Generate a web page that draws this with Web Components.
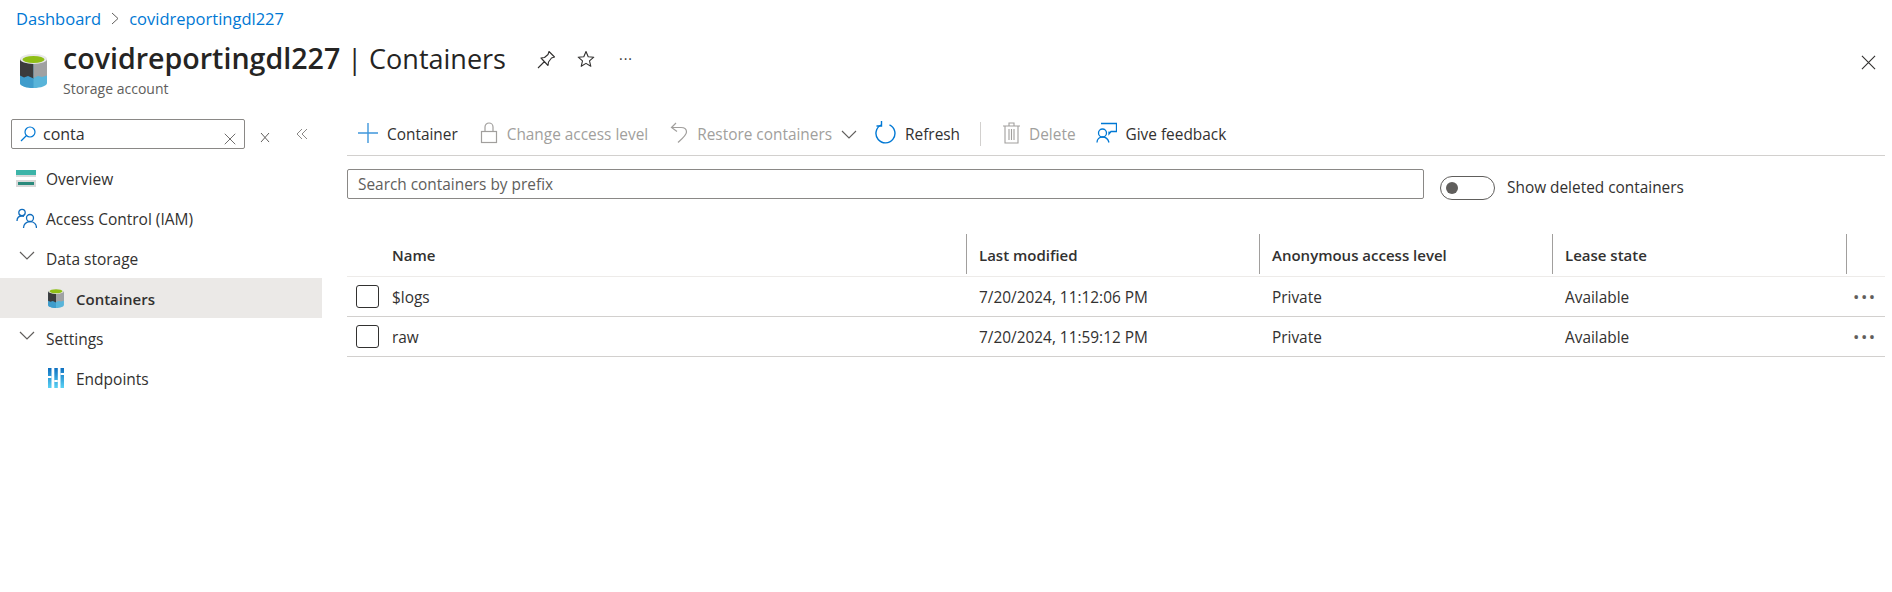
<!DOCTYPE html>
<html>
<head>
<meta charset="utf-8">
<title>covidreportingdl227 | Containers</title>
<style>
  html, body { margin: 0; height: 100%; background: #fff; }
  body { font-family: "Open Sans", "Noto Sans", sans-serif; font-size: 16px; color: #323130; overflow: hidden; }
</style>
</head>
<body>
<az-blade></az-blade>

<script>
// Icons used by more than one element.
const icons = {
  storage: `<svg viewBox="0 0 27 34" width="100%" height="100%">
    <path d="M0 5v24c0 2.700 6 5 13.500 5s13.500-2.300 13.500-5V5z" fill="#59b4d9"/>
    <path d="M0 5v24c0 2.700 6 5 13.500 5V5z" fill="#3f9ccb"/>
    <path d="M0 5v16.500l4 2 4-1.500 5.500 2.500V5z" fill="#3b3b3c"/>
    <path d="M27 5v16.500l-5 1.500-4-1-4.500 2V5z" fill="#a0a1a2"/>
    <ellipse cx="13.500" cy="5" rx="13.500" ry="5" fill="#e8e8e8"/>
    <ellipse cx="13.500" cy="5.500" rx="11" ry="3.500" fill="#8fbe15"/>
  </svg>`,
  close: `<svg viewBox="0 0 16 16" width="100%" height="100%"><path d="M1 1l14 14M15 1L1 15" stroke="currentColor" stroke-width="1.200" fill="none"/></svg>`,
  chevron: `<svg viewBox="0 0 16 10" width="100%" height="100%"><path d="M1 1l7 7 7-7" stroke="currentColor" stroke-width="1.200" fill="none"/></svg>`
};

customElements.define("az-breadcrumb", class AzBreadcrumb extends HTMLElement {
  constructor() {
    super();
    this.attachShadow({ mode: "open" }).innerHTML = `
      <style>
        :host { display: flex; align-items: center; height: 36px; padding-left: 16px; color: #0078d4; font-size: 16.500px; gap: 10px; }
        svg { color: #605e5c; }
      </style>
      <span>Dashboard</span>
      <svg width="8" height="13" viewBox="0 0 8 13"><path d="M1 1l6 5.500-6 5.500" stroke="currentColor" fill="none"/></svg>
      <span>covidreportingdl227</span>`;
  }
});

customElements.define("az-page-header", class AzPageHeader extends HTMLElement {
  constructor() {
    super();
    this.attachShadow({ mode: "open" }).innerHTML = `
      <style>
        :host { display: flex; height: 74px; box-sizing: border-box; padding: 18px 16px 0 20px; }
        .logo { width: 27px; height: 34px; margin-right: 16px; }
        .titles { display: flex; flex-direction: column; }
        h1 { margin: -14px 0 0; font-size: 27px; line-height: 36px; font-weight: 400; color: #252423; white-space: nowrap; }
        h1 b { font-weight: 600; font-size: 28.600px; }
        small { font-size: 14px; line-height: 20px; color: #605e5c; margin-top: 2px; }
        .cmds { display: flex; gap: 21px; align-items: center; height: 24px; margin: -7px 0 0 31px; color: #323130; }
        .dots { font-size: 14px; letter-spacing: 1px; margin: -2px 0 0 3px; }
        .close { width: 15px; height: 15px; margin: 0 0 0 auto; color: #323130; margin-top: -1px; }
      </style>
      <div class="logo">${icons.storage}</div>
      <div class="titles">
        <h1><b>covidreportingdl227</b> | Containers</h1>
        <small>Storage account</small>
      </div>
      <div class="cmds">
        <svg width="19" height="19" viewBox="0 0 19 19" fill="none" stroke="currentColor" stroke-width="1.100"><path d="M12 1.500l5.500 5.500-3 1-3 4-.5 3.500L4 8l3.500-.5 3.500-3zM7.500 11.500L1 18" stroke-linejoin="round"/></svg>
        <svg width="18" height="18" viewBox="0 0 18 18" fill="none" stroke="currentColor" stroke-width="1.100"><path d="M9 1.500l2.200 5.200 5.600.5-4.300 3.600 1.300 5.500L9 13.400l-4.800 2.900 1.300-5.500L1.200 7.200l5.600-.5z" stroke-linejoin="round"/></svg>
        <span class="dots">···</span>
      </div>
      <div class="close">${icons.close}</div>`;
  }
});

customElements.define("az-nav-item", class AzNavItem extends HTMLElement {
  constructor() {
    super();
    this.attachShadow({ mode: "open" }).innerHTML = `
      <style>
        :host { display: flex; align-items: center; height: 40px; box-sizing: border-box; padding: 2px 0 0 16px; color: #323130; font-size: 15.500px; }
        :host([child]) { padding-left: 46px; }
        :host([selected]) { background: #ebe9e7; font-weight: 600; font-size: 15px; }
        .icon { display: flex; width: 22px; height: 20px; margin: -2px 8px 0 0; align-items: center; justify-content: flex-start; }
      </style>
      <span class="icon"><slot name="icon"></slot></span>
      <slot></slot>`;
  }
});

customElements.define("az-side-nav", class AzSideNav extends HTMLElement {
  constructor() {
    super();
    this.attachShadow({ mode: "open" }).innerHTML = `
      <style>
        :host { display: block; width: 322px; flex: none; }
        .searchrow { display: flex; align-items: flex-start; height: 48px; padding: 9px 0 0 11px; box-sizing: border-box; }
        .search { display: flex; align-items: center; width: 234px; height: 30px; box-sizing: border-box; border: 1px solid #8a8886; border-radius: 2px; padding: 0 8px 0 8px; font-size: 16px; }
        .search span { flex: 1; margin-left: 7px; }
        .x { width: 12px; height: 12px; color: #605e5c; }
        .side-x { width: 10px; height: 12px; margin: 8px 0 0 15px; color: #605e5c; }
        .collapse { margin: 9px 0 0 26px; color: #8a8886; }
        nav { display: block; }
      </style>
      <div class="searchrow">
        <div class="search">
          <svg width="16" height="16" viewBox="0 0 16 16" fill="none" stroke="#0078d4" stroke-width="1.200"><circle cx="10" cy="6" r="5"/><path d="M6.500 9.500L1 15"/></svg>
          <span>conta</span>
          <div class="x">${icons.close}</div>
        </div>
        <div class="side-x"><svg viewBox="0 0 10 12" width="10" height="12" fill="none" stroke="currentColor"><path d="M1 1l8 9M9 1l-8 9M1 11h.1M9 11h.1"/></svg></div>
        <svg class="collapse" width="12" height="12" viewBox="0 0 12 12" fill="none" stroke="currentColor"><path d="M6 1L1 6l5 5M11 1L6 6l5 5"/></svg>
      </div>
      <nav><slot></slot></nav>`;
  }
});

customElements.define("az-tool-button", class AzToolButton extends HTMLElement {
  constructor() {
    super();
    this.attachShadow({ mode: "open" }).innerHTML = `
      <style>
        :host { display: inline-flex; align-items: center; gap: 9px; height: 36px; padding: 0 11px; color: #323130; font-size: 15.400px; white-space: nowrap; }
        :host([disabled]) { color: #a19f9d; }
        .icon { display: flex; align-items: center; margin-top: -2px; }
        .label { display: flex; align-items: center; gap: 9px; padding-top: 2px; }
      </style>
      <span class="icon"><slot name="icon"></slot></span>
      <span class="label"><slot></slot></span>`;
  }
});

customElements.define("az-toolbar", class AzToolbar extends HTMLElement {
  constructor() {
    super();
    this.attachShadow({ mode: "open" }).innerHTML = `
      <style>
        :host { display: flex; align-items: center; height: 46px; box-sizing: border-box; padding: 2px 0 0; border-bottom: 1px solid #d2d0ce; }
      </style>
      <slot></slot>`;
  }
});

customElements.define("az-filter-bar", class AzFilterBar extends HTMLElement {
  constructor() {
    super();
    this.attachShadow({ mode: "open" }).innerHTML = `
      <style>
        :host { display: flex; align-items: flex-start; margin-top: 13px; height: 65px; font-size: 15.400px; }
        .box { width: 1077px; height: 30px; box-sizing: border-box; border: 1px solid #8a8886; border-radius: 2px; padding-left: 10px; line-height: 30px; color: #605e5c; }
        .toggle { width: 55px; height: 24px; box-sizing: border-box; margin: 7px 12px 0 16px; border: 1px solid #605e5c; border-radius: 12px; padding: 5px; }
        .knob { display: block; width: 12px; height: 12px; border-radius: 50%; background: #605e5c; }
        .label { margin-top: 7px; line-height: 24px; }
      </style>
      <div class="box">Search containers by prefix</div>
      <div class="toggle"><span class="knob"></span></div>
      <div class="label">Show deleted containers</div>`;
  }
});

customElements.define("az-grid-row", class AzGridRow extends HTMLElement {
  constructor() {
    super();
    this.attachShadow({ mode: "open" }).innerHTML = `
      <style>
        :host { display: grid; grid-template-columns: 619px 293px 293px 294px 39px; height: 40px; box-sizing: border-box; border-bottom: 1px solid #d2d0ce; font-size: 15.400px; color: #323130; align-items: center; }
        :host([header]) { height: 43px; font-weight: 600; font-size: 15px; border-bottom: 1px solid #edebe9; align-items: stretch; padding-bottom: 2px; }
        ::slotted(*) { display: flex; align-items: center; }
        .first { display: flex; align-items: center; height: 100%; }
        .check { width: 23px; height: 23px; box-sizing: border-box; border: 1px solid #323130; border-radius: 3px; margin: 0 13px 0 9px; }
        :host([header]) .check { visibility: hidden; }
      </style>
      <div class="first"><span class="check"></span><slot name="name"></slot></div>
      <slot name="modified"></slot>
      <slot name="access"></slot>
      <slot name="lease"></slot>
      <slot name="more"></slot>`;
  }
});

customElements.define("az-cell", class AzCell extends HTMLElement {
  constructor() {
    super();
    this.attachShadow({ mode: "open" }).innerHTML = `
      <style>
        :host { display: flex; align-items: center; height: 100%; box-sizing: border-box; padding: 2px 0 0 13px; }
        :host([head]) { border-left: 1px solid #a19f9d; padding-left: 12px; }
        :host([plain]) { padding-left: 0; border: 0; }
        :host([tail]) { padding: 0 0 0 7px; font-size: 17px; letter-spacing: 1.500px; color: #605e5c; }
      </style>
      <slot></slot>`;
  }
});

const rowMarkup = (name, date) => `
  <az-grid-row>
    <az-cell slot="name" plain>${name}</az-cell>
    <az-cell slot="modified">${date}</az-cell>
    <az-cell slot="access">Private</az-cell>
    <az-cell slot="lease">Available</az-cell>
    <az-cell slot="more" tail>•••</az-cell>
  </az-grid-row>`;

customElements.define("az-blade", class AzBlade extends HTMLElement {
  constructor() {
    super();
    this.attachShadow({ mode: "open" }).innerHTML = `
      <style>
        :host { display: flex; flex-direction: column; height: 592px; }
        .body { display: flex; flex: 1; }
        main { flex: 1; margin: 0 7px 0 25px; min-width: 0; }
        .sep { width: 1px; height: 24px; background: #d2d0ce; margin: 0 11px 0 9px; }
        .refresh { margin-left: -4px; }
        .feedback { margin-left: -2px; }
        svg { display: block; }
      </style>
      <az-breadcrumb></az-breadcrumb>
      <az-page-header></az-page-header>
      <div class="body">
        <az-side-nav>
          <az-nav-item>
            <svg slot="icon" width="20" height="17" viewBox="0 0 20 17"><rect width="20" height="17" fill="#d9d9d9"/><rect width="20" height="5" fill="#3cb4a8"/><rect y="7" width="20" height="3" fill="#fff"/><rect x="2" y="12" width="16" height="3" fill="#2a8a7c"/></svg>
            Overview
          </az-nav-item>
          <az-nav-item>
            <svg slot="icon" width="21" height="21" viewBox="0 0 21 21" fill="none" stroke="#0f6cbd" stroke-width="1.300"><circle cx="6" cy="4.500" r="3.200"/><path d="M1 13c0-3 2-5 5-5 1 0 1.500.2 2 .4"/><circle cx="14" cy="10" r="3.500"/><path d="M7.500 20c0-3.500 2.500-6.300 6.500-6.300s6.500 2.800 6.500 6.300"/></svg>
            Access Control (IAM)
          </az-nav-item>
          <az-nav-item>
            <span slot="icon" style="width:16px;height:10px;margin:-4px 0 0 3px;color:#605e5c;display:block">${icons.chevron}</span>
            Data storage
          </az-nav-item>
          <az-nav-item child selected>
            <span slot="icon" style="width:16px;height:20px;margin-left:2px;display:block">${icons.storage}</span>
            Containers
          </az-nav-item>
          <az-nav-item>
            <span slot="icon" style="width:16px;height:10px;margin:-4px 0 0 3px;color:#605e5c;display:block">${icons.chevron}</span>
            Settings
          </az-nav-item>
          <az-nav-item child>
            <svg slot="icon" style="margin-left:2px" width="16" height="20" viewBox="0 0 16 20"><defs><linearGradient id="ep" x1="0" y1="0" x2="0" y2="1"><stop offset="0" stop-color="#0d6fc0"/><stop offset="1" stop-color="#5ad2f4"/></linearGradient></defs><rect width="3.500" height="20" fill="url(#ep)"/><rect x="6.300" width="3.500" height="20" fill="url(#ep)"/><rect x="12.500" width="3.500" height="20" fill="url(#ep)"/><rect y="8" width="3.500" height="2" fill="#fff"/><rect x="6.300" y="12" width="3.500" height="2" fill="#fff"/><rect x="12.500" y="5" width="3.500" height="2" fill="#fff"/></svg>
            Endpoints
          </az-nav-item>
        </az-side-nav>
        <main>
          <az-toolbar>
            <az-tool-button>
              <svg slot="icon" width="20" height="20" viewBox="0 0 20 20" stroke="#3f97dc" stroke-width="1.400"><path d="M10 0v20M0 10h20"/></svg>
              Container
            </az-tool-button>
            <az-tool-button disabled>
              <svg slot="icon" width="18" height="22" viewBox="0 0 18 22" fill="none" stroke="#a19f9d" stroke-width="1.200"><rect x="1.500" y="9.500" width="15" height="11"/><path d="M5 9.500V5a4 4 0 018 0v4.500"/></svg>
              Change access level
            </az-tool-button>
            <az-tool-button disabled>
              <svg slot="icon" width="18" height="22" viewBox="0 0 18 22" fill="none" stroke="#a19f9d" stroke-width="1.200"><path d="M6 1L1.500 5.500 7 9.500"/><path d="M1.500 5.500H11c3.500 0 5.500 2 5.500 4.500 0 3-3 5.500-8.500 10.500"/></svg>
              Restore containers
              <svg width="16" height="10" viewBox="0 0 16 10" fill="none" stroke="#605e5c" stroke-width="1.100"><path d="M1 1l7 7 7-7"/></svg>
            </az-tool-button>
            <az-tool-button class="refresh">
              <svg slot="icon" width="21" height="24" viewBox="0 0 21 24" fill="none" stroke="#0078d4" stroke-width="1.400"><path d="M14.500 3.800a9.500 9.500 0 11-8.500.2"/><path d="M6.500 0v5H1.500"/></svg>
              Refresh
            </az-tool-button>
            <span class="sep"></span>
            <az-tool-button disabled>
              <svg slot="icon" width="17" height="22" viewBox="0 0 17 22" fill="none" stroke="#a19f9d" stroke-width="1.100"><path d="M0 4h17M6 4V1h5v3M2 4v17h13V4M6 7v11M8.500 7v11M11 7v11"/></svg>
              Delete
            </az-tool-button>
            <az-tool-button class="feedback">
              <svg slot="icon" width="21" height="21" viewBox="0 0 21 21" fill="none" stroke="#0078d4" stroke-width="1.300"><circle cx="6.500" cy="11" r="4"/><path d="M1 20.500c0-3.500 2.500-5.500 5.500-5.500s5.500 2 6.500 5.500M5 1.500h15.500v8H15l-2 2.500V9.500"/></svg>
              Give feedback
            </az-tool-button>
          </az-toolbar>
          <az-filter-bar></az-filter-bar>
          <az-grid-row header>
            <az-cell slot="name" plain>Name</az-cell>
            <az-cell slot="modified" head>Last modified</az-cell>
            <az-cell slot="access" head>Anonymous access level</az-cell>
            <az-cell slot="lease" head>Lease state</az-cell>
            <az-cell slot="more" head></az-cell>
          </az-grid-row>
          ${rowMarkup("$logs", "7/20/2024, 11:12:06 PM")}
          ${rowMarkup("raw", "7/20/2024, 11:59:12 PM")}
        </main>
      </div>`;
  }
});
</script>
</body>
</html>
